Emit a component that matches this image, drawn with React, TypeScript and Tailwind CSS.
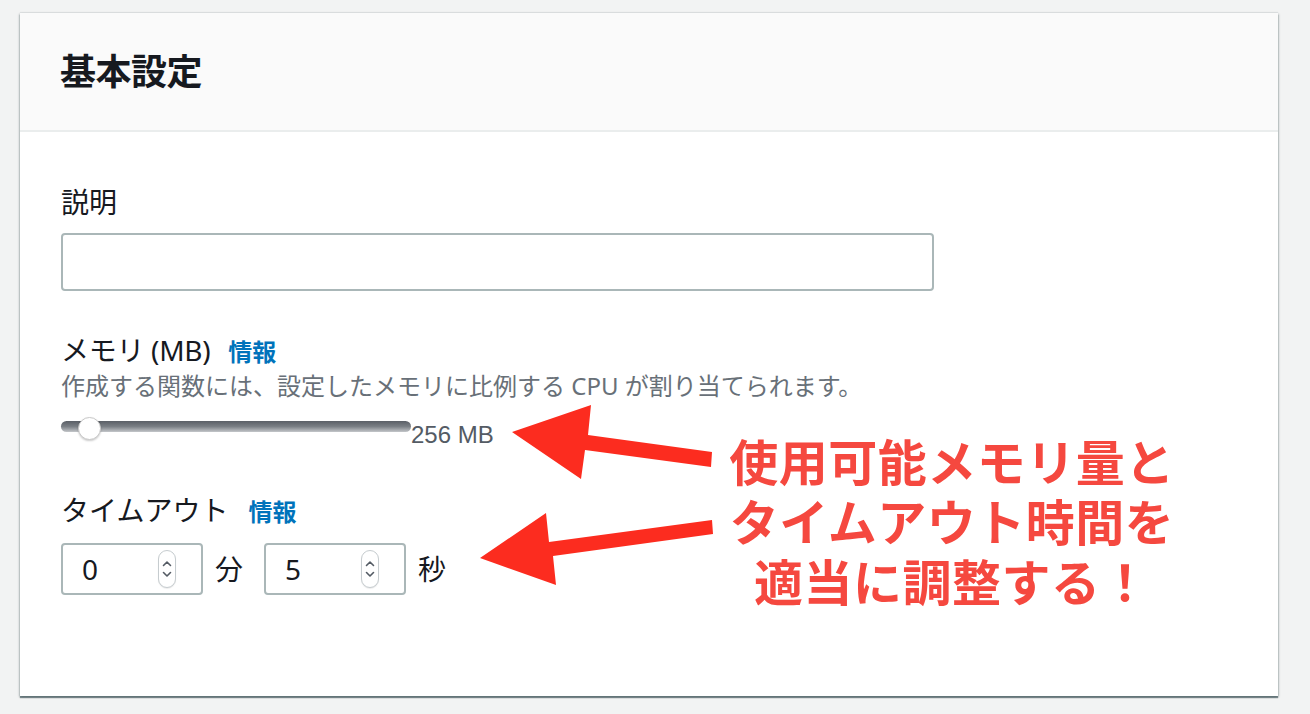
import React from "react";

function Spinner() {
  return (
    <div className="w-[18px] h-[38px] rounded-full border border-[#c6cccf] bg-white flex flex-col items-center justify-center gap-[4px] shadow-[0_1px_1px_rgba(0,0,0,0.08)]">
      <svg width="10" height="7" viewBox="0 0 10 7">
        <path d="M1.5 5.5 L5 2 L8.5 5.5" fill="none" stroke="#545b64" strokeWidth="1.6" strokeLinecap="round" strokeLinejoin="round" />
      </svg>
      <svg width="10" height="7" viewBox="0 0 10 7">
        <path d="M1.5 1.5 L5 5 L8.5 1.5" fill="none" stroke="#545b64" strokeWidth="1.6" strokeLinecap="round" strokeLinejoin="round" />
      </svg>
    </div>
  );
}

function NumBox({ value }: { value: string }) {
  return (
    <div className="w-[142px] h-[52px] border-2 border-[#aab7b8] rounded-[4px] bg-white flex items-center pl-[19px] pr-[25px]">
      <span className="flex-1 text-[28px] leading-none text-[#16191f]">{value}</span>
      <Spinner />
    </div>
  );
}

export default function App() {
  return (
    <div className="relative w-[1310px] h-[714px] bg-[#f2f3f3] pt-[13px] pl-[20px] font-['Noto_Sans','Noto_Sans_CJK_JP',sans-serif] text-[#16191f] overflow-hidden">
      <div className="w-[1258px] h-[683px] bg-white flex flex-col shadow-[0_2px_1px_0_rgba(0,28,36,0.45),1px_1px_2px_0_rgba(0,28,36,0.2),-1px_1px_2px_0_rgba(0,28,36,0.2),0_-1px_1px_0_rgba(0,28,36,0.08)]">
        <div className="h-[119px] bg-[#fafafa] border-b-2 border-[#eaeded] flex items-center pl-[40px]">
          <h2 className="text-[36px] font-bold leading-none tracking-[-0.5px]">基本設定</h2>
        </div>
        <div className="pl-[41px] pt-[50px] flex flex-col">
          <div className="text-[28px] leading-[40px]">説明</div>
          <div className="mt-[11px] w-[873px] h-[58px] border-2 border-[#aab7b8] rounded-[4px] bg-white" />

          <div className="mt-[41px] flex items-baseline">
            <span className="text-[28px] leading-[36px] tracking-[-0.3px]">メモリ (MB)</span>
            <span className="ml-[18px] text-[24px] font-bold leading-[36px] text-[#0073bb]">情報</span>
          </div>
          <div className="text-[24px] leading-[32px] text-[#687078]">
            作成する関数には、設定したメモリに比例する CPU が割り当てられます。
          </div>

          <div className="mt-[19px] flex items-start">
            <div className="relative w-[350px] h-[11px] rounded-full bg-gradient-to-b from-[#5a5f66] via-[#7a7f85] to-[#c4c7ca]">
              <div className="absolute left-[17px] top-[-4px] w-[23px] h-[23px] rounded-full bg-white border border-[#c9c9c9] shadow-[0_1px_2px_rgba(0,0,0,0.2)]" />
            </div>
            <span className="text-[24px] leading-[28px] text-[#545b64] font-['Liberation_Sans',sans-serif]">256 MB</span>
          </div>

          <div className="mt-[43px] flex items-baseline">
            <span className="text-[28px] leading-[36px]">タイムアウト</span>
            <span className="ml-[20px] text-[24px] font-bold leading-[36px] text-[#0073bb]">情報</span>
          </div>
          <div className="mt-[13px] flex items-center">
            <NumBox value="0" />
            <span className="ml-[12px] mr-[21px] text-[28px] leading-none">分</span>
            <NumBox value="5" />
            <span className="ml-[12px] text-[28px] leading-none">秒</span>
          </div>
        </div>
      </div>

      <svg className="absolute left-0 top-0 pointer-events-none" width="1310" height="714" viewBox="0 0 1310 714">
        <polygon points="512,432 591,405 588,435 712,452 711,467 585,450 581,479" fill="#fc2c1f" />
        <polygon points="480,558 546,513 549,542 712,520 713,534 553,556 556,585" fill="#fc2c1f" />
      </svg>

      <div className="absolute left-[700px] top-[430px] w-[504px] text-center text-[49px] font-bold leading-[60px] tracking-[0.5px] text-[#f5483f] font-['Noto_Sans_CJK_JP',sans-serif]">
        <div>使用可能メモリ量と</div>
        <div>タイムアウト時間を</div>
        <div>適当に調整する！</div>
      </div>
    </div>
  );
}
